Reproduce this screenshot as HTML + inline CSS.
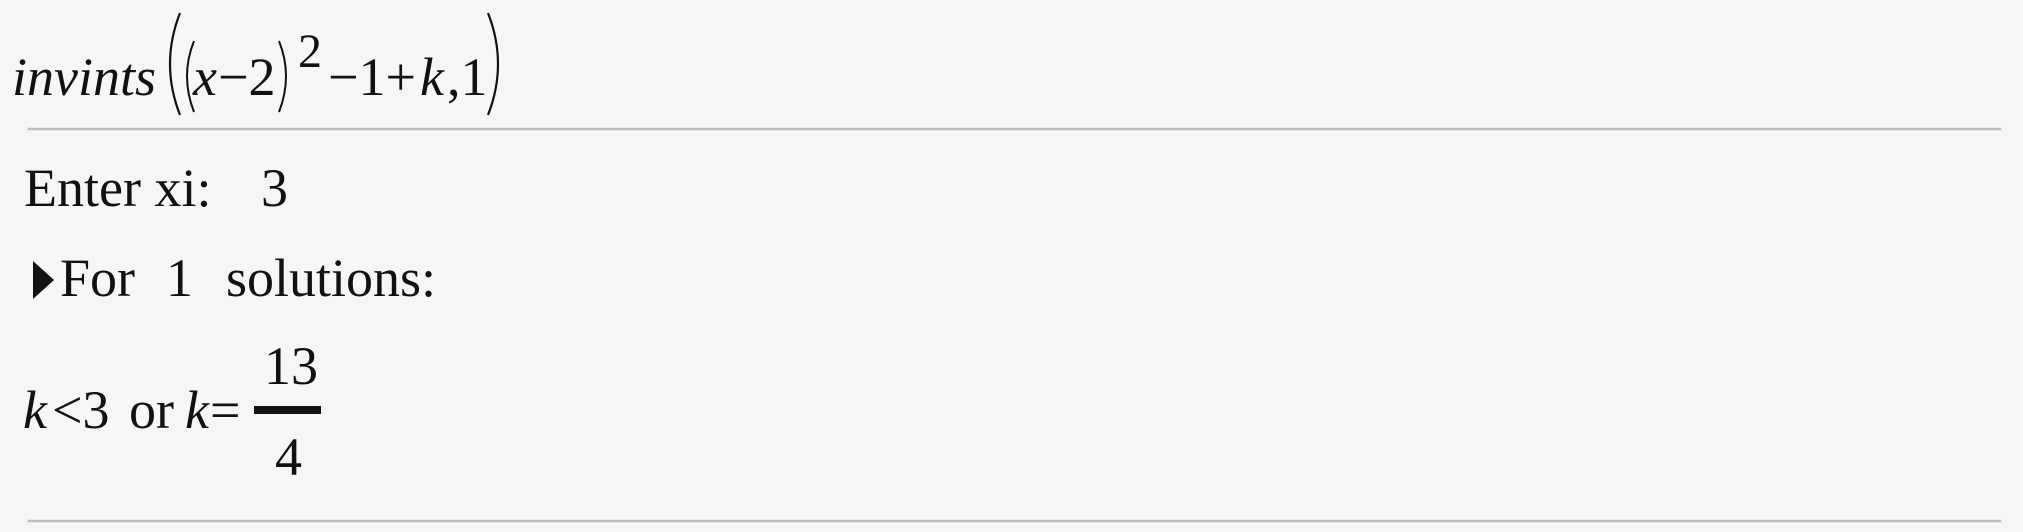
<!DOCTYPE html>
<html><head><meta charset="utf-8"><style>
html,body{margin:0;padding:0}
body{width:2023px;height:532px;background:#f6f6f6;position:relative;overflow:hidden;font-family:"Liberation Serif",serif;color:#111}
.t{position:absolute;font-size:54px;line-height:1;white-space:pre}
.i{font-style:italic}
.hr{position:absolute;left:28px;width:1973px;height:2px;background:#bdbdbd;box-shadow:0 0 0 1px #e8e8e8}
</style></head><body>
<!-- line 1 -->
<span class="t i" style="left:12px;top:50px">invints</span>
<svg style="position:absolute;left:0;top:0" width="560" height="140">
<path d="M180 13 Q160 64 180 115" fill="none" stroke="#111" stroke-width="2.2"/>
<path d="M194 41 Q180 76 194 112" fill="none" stroke="#111" stroke-width="2"/>
<path d="M279 41 Q293 76 279 112" fill="none" stroke="#111" stroke-width="2"/>
<path d="M488 13 Q508 64 488 115" fill="none" stroke="#111" stroke-width="2.2"/>
</svg>
<span class="t i" style="left:193px;top:50px">x</span>
<span class="t" style="left:218px;top:50px">−2</span>
<span class="t" style="left:298px;top:28px;font-size:48px">2</span>
<span class="t" style="left:328px;top:50px">−1+</span>
<span class="t i" style="left:420px;top:50px">k</span>
<span class="t" style="left:447px;top:50px">,1</span>
<div class="hr" style="top:128px"></div>
<!-- line 2 -->
<span class="t" style="left:24px;top:161px">Enter xi:</span>
<span class="t" style="left:261px;top:161px">3</span>
<!-- line 3 -->
<svg style="position:absolute;left:30px;top:258px" width="30" height="45"><polygon points="3,3 24,22 3,41" fill="#111"/></svg>
<span class="t" style="left:60px;top:251px">For</span>
<span class="t" style="left:166px;top:251px">1</span>
<span class="t" style="left:226px;top:251px">solutions:</span>
<!-- line 4 -->
<span class="t i" style="left:23px;top:383px">k</span>
<span class="t" style="left:52px;top:383px">&lt;3</span>
<span class="t" style="left:129px;top:383px">or</span>
<span class="t i" style="left:185px;top:383px">k</span>
<span class="t" style="left:210px;top:383px">=</span>
<span class="t" style="left:264px;top:339px">13</span>
<div style="position:absolute;left:254px;top:406px;width:67px;height:8px;background:#111"></div>
<span class="t" style="left:275px;top:430px">4</span>
<div class="hr" style="top:520px"></div>
</body></html>
